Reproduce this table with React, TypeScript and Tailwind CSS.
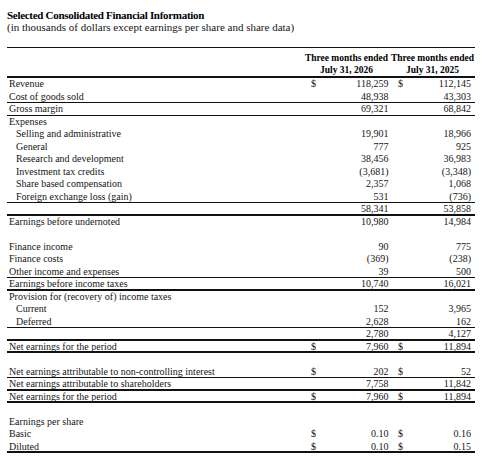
import React from "react";

type Row = {
  label?: string;
  indent?: boolean;
  a?: string;
  b?: string;
  da?: boolean;
  db?: boolean;
  line?: "thin" | "thick";
};

const rows: Row[] = [
  { label: "Revenue", a: "118,259", b: "112,145", da: true, db: true },
  { label: "Cost of goods sold", a: "48,938", b: "43,303", line: "thin" },
  { label: "Gross margin", a: "69,321", b: "68,842", line: "thin" },
  { label: "Expenses" },
  { label: "Selling and administrative", indent: true, a: "19,901", b: "18,966" },
  { label: "General", indent: true, a: "777", b: "925" },
  { label: "Research and development", indent: true, a: "38,456", b: "36,983" },
  { label: "Investment tax credits", indent: true, a: "(3,681)", b: "(3,348)" },
  { label: "Share based compensation", indent: true, a: "2,357", b: "1,068" },
  { label: "Foreign exchange loss (gain)", indent: true, a: "531", b: "(736)", line: "thin" },
  { label: "", a: "58,341", b: "53,858", line: "thick" },
  { label: "Earnings before undernoted", a: "10,980", b: "14,984" },
  { label: "" },
  { label: "Finance income", a: "90", b: "775" },
  { label: "Finance costs", a: "(369)", b: "(238)" },
  { label: "Other income and expenses", a: "39", b: "500", line: "thin" },
  { label: "Earnings before income taxes", a: "10,740", b: "16,021", line: "thick" },
  { label: "Provision for (recovery of) income taxes" },
  { label: "Current", indent: true, a: "152", b: "3,965" },
  { label: "Deferred", indent: true, a: "2,628", b: "162", line: "thin" },
  { label: "", a: "2,780", b: "4,127", line: "thick" },
  { label: "Net earnings for the period", a: "7,960", b: "11,894", da: true, db: true, line: "thick" },
  { label: "" },
  { label: "Net earnings attributable to non-controlling interest", a: "202", b: "52", da: true, db: true, line: "thin" },
  { label: "Net earnings attributable to shareholders", a: "7,758", b: "11,842", line: "thick" },
  { label: "Net earnings for the period", a: "7,960", b: "11,894", da: true, db: true, line: "thick" },
  { label: "" },
  { label: "Earnings per share" },
  { label: "Basic", a: "0.10", b: "0.16", da: true, db: true },
  { label: "Diluted", a: "0.10", b: "0.15", da: true, db: true, line: "thick" },
];

function FinRow({ r }: { r: Row }) {
  const lineCls =
    r.line === "thick"
      ? "shadow-[inset_0_-2px_0_#111]"
      : r.line === "thin"
      ? "shadow-[inset_0_-1px_0_#111]"
      : "";
  return (
    <div className={`grid grid-cols-[296px_87px_85px] h-[12.5px] leading-[12.5px] ${lineCls}`}>
      <div className={`whitespace-nowrap ${r.indent ? "pl-[9px]" : "pl-[2px]"}`}>{r.label}</div>
      <div className="flex justify-between pl-[8px] pr-[1.5px]">
        <span>{r.da ? "$" : ""}</span>
        <span>{r.a ?? ""}</span>
      </div>
      <div className="flex justify-between pl-[8px] pr-[4px]">
        <span>{r.db ? "$" : ""}</span>
        <span>{r.b ?? ""}</span>
      </div>
    </div>
  );
}

export default function App() {
  return (
    <div
      className="w-[486px] h-[472px] bg-white text-[#151515] pt-[9px] pl-[7px]"
      style={{ fontFamily: '"Liberation Serif", "Times New Roman", serif' }}
    >
      <div className="font-bold text-[11px] tracking-[-0.3px] leading-[12px] text-black">
        Selected Consolidated Financial Information
      </div>
      <div className="text-[11px] leading-[12px]">
        (in thousands of dollars except earnings per share and share data)
      </div>
      <div className="mt-[14px] w-[468px] text-[10px]">
        <div className="grid grid-cols-[296px_87px_85px] border-t border-[#111] border-b-2 pt-[4px] h-[31px] font-bold text-[9.5px] leading-[12px] text-black">
          <div />
          <div className="flex flex-col items-center whitespace-nowrap">
            <span>Three months ended</span>
            <span>July 31, 2026</span>
          </div>
          <div className="flex flex-col items-center whitespace-nowrap">
            <span>Three months ended</span>
            <span>July 31, 2025</span>
          </div>
        </div>
        {rows.map((r, i) => (
          <FinRow key={i} r={r} />
        ))}
      </div>
    </div>
  );
}
